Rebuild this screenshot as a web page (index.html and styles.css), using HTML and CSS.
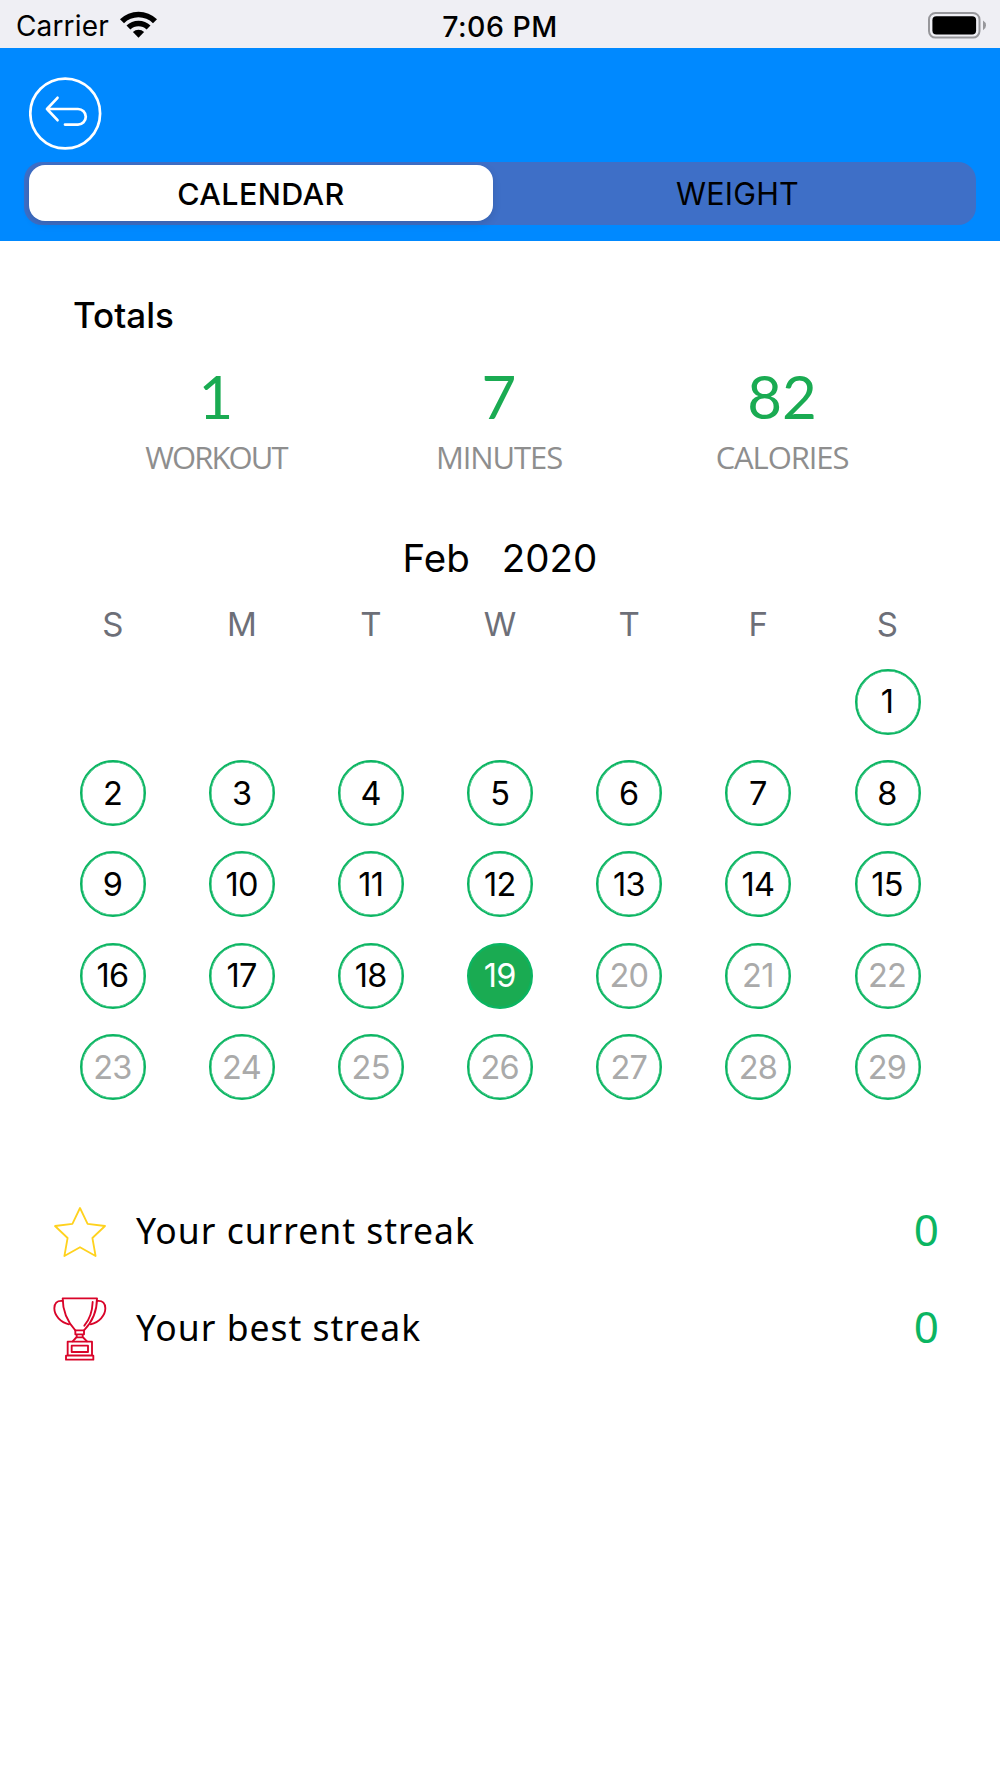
FILE: index.html
```
<!DOCTYPE html>
<html lang="en">
<head>
    <meta charset="UTF-8">
    <meta name="viewport" content="width=device-width, initial-scale=1.0">
    <title>Workout Calendar</title>
    <link rel="stylesheet" href="styles.css">
</head>
<body>
    <div class="status-bar">
        <div class="carrier">
            <span class="carrier-name">Carrier</span>
            <svg class="wifi" width="37" height="27" viewBox="0 0 37 27">
                <path d="M0 8.2 A26.5 26.5 0 0 1 37 8.2 L33 12.2 A20.8 20.8 0 0 0 4 12.2 Z"/>
                <path d="M6.5 14.6 A17.2 17.2 0 0 1 30.5 14.6 L26.6 18.5 A11.7 11.7 0 0 0 10.4 18.5 Z"/>
                <path d="M12.9 21 A8.2 8.2 0 0 1 24.1 21 L18.5 26.8 Z"/>
            </svg>
        </div>
        <div class="time">7:06 PM</div>
        <svg class="battery" width="59" height="27" viewBox="0 0 59 27">
            <rect x="1" y="1" width="50.5" height="24.6" rx="6.5" fill="none" stroke="#97979b" stroke-width="2"/>
            <rect x="4.4" y="4.2" width="43.7" height="18.2" rx="4"/>
            <path d="M55 8.6 Q58 10.4 58 13.4 Q58 16.4 55 18.2 Z" fill="#97979b"/>
        </svg>
    </div>

    <header class="header">
        <button class="back" type="button" aria-label="Back">
            <svg width="73" height="73" viewBox="0 0 73 73">
                <circle cx="36.2" cy="36.5" r="34.9"/>
                <path d="M28.5 20.8 L18 32 L28.5 43.2 M18 32 H49 A7.8 7.8 0 0 1 49 47.6 H36"/>
            </svg>
        </button>
        <div class="tabs">
            <div class="tab active"><span>CALENDAR</span></div>
            <div class="tab"><span>WEIGHT</span></div>
        </div>
    </header>

    <main>
        <h1>Totals</h1>
        <div class="totals">
            <div class="total">
                <div class="value">1</div>
                <div class="label workout">WORKOUT</div>
            </div>
            <div class="total">
                <div class="value">7</div>
                <div class="label">MINUTES</div>
            </div>
            <div class="total">
                <div class="value">82</div>
                <div class="label">CALORIES</div>
            </div>
        </div>

        <div class="month"><span>Feb</span><span>2020</span></div>
        <div class="weekdays">
            <span>S</span><span>M</span><span>T</span><span>W</span><span>T</span><span>F</span><span>S</span>
        </div>
        <div class="days">
            <span class="day first">1</span>
            <span class="day">2</span>
            <span class="day">3</span>
            <span class="day">4</span>
            <span class="day">5</span>
            <span class="day">6</span>
            <span class="day">7</span>
            <span class="day">8</span>
            <span class="day">9</span>
            <span class="day">10</span>
            <span class="day">11</span>
            <span class="day">12</span>
            <span class="day">13</span>
            <span class="day">14</span>
            <span class="day">15</span>
            <span class="day">16</span>
            <span class="day">17</span>
            <span class="day">18</span>
            <span class="day today">19</span>
            <span class="day future">20</span>
            <span class="day future">21</span>
            <span class="day future">22</span>
            <span class="day future">23</span>
            <span class="day future">24</span>
            <span class="day future">25</span>
            <span class="day future">26</span>
            <span class="day future">27</span>
            <span class="day future">28</span>
            <span class="day future">29</span>
        </div>

        <div class="streaks">
            <div class="streak">
                <svg class="star" width="54" height="52" viewBox="0 0 54 52">
                    <path d="M27 2 L34.6 17.8 L52 20 L39.4 32 L42.6 50 L27 41.2 L11.4 50 L14.6 32 L2 20 L19.4 17.8 Z"/>
                </svg>
                <span class="streak-name">Your current streak</span>
                <span class="streak-value">0</span>
            </div>
            <div class="streak">
                <svg class="trophy" width="54" height="64" viewBox="39 320 162 192">
                    <path d="M68 324 H171 C171 364 160 392 132 420 H106 C80 392 68 364 68 324 Z"/>
                    <path d="M68 332 C50 330 43 340 43 354 C43 376 62 396 87 402"/>
                    <path d="M171 332 C189 330 196 340 196 354 C196 376 177 396 152 402"/>
                    <path d="M158 335 C157 366 149 387 133 406"/>
                    <path d="M106 420 V432 H132 V420 M110 432 V440 L98 453 M128 432 V440 L141 453 M110 441 H128"/>
                    <path d="M83 454 H156 V495 H83 Z M95 466 H144 V485 H95 Z M78 496 H160 V508 H78 Z"/>
                </svg>
                <span class="streak-name">Your best streak</span>
                <span class="streak-value">0</span>
            </div>
        </div>
    </main>
</body>
</html>
```
FILE: styles.css
```
* {
    margin: 0;
    padding: 0;
    box-sizing: border-box;
}

body {
    font-family: Inter, 'Liberation Sans', sans-serif;
    background: #fff;
    color: #000;
    min-height: 100vh;
}

.status-bar {
    display: grid;
    grid-template-columns: 1fr auto 1fr;
    align-items: center;
    height: 48px;
    padding: 0 13px 0 16px;
    background: #efeff4;
}

.carrier {
    display: flex;
    align-items: center;
    gap: 11px;
}

.carrier-name {
    font-size: 28px;
    line-height: 48px;
    padding-top: 2px;
    letter-spacing: 0.15px;
}

.wifi {
    margin-bottom: 1px;
}

.time {
    font-size: 28.5px;
    font-weight: 500;
    padding: 2px 3px 0 0;
    letter-spacing: 0.5px;
}

.battery {
    justify-self: end;
}

.header {
    height: 193px;
    padding: 29px 24px 0;
    background: #0089ff;
}

.back {
    display: block;
    width: 73px;
    height: 73px;
    margin-left: 5px;
    background: none;
    border: none;
}

.back svg {
    display: block;
    fill: none;
    stroke: #fff;
    stroke-width: 2.7;
    stroke-linecap: round;
    stroke-linejoin: round;
}

.tabs {
    display: flex;
    height: 63px;
    margin-top: 12px;
    padding: 3px 5px 4px;
    background: #3e6fc7;
    border-radius: 18px;
}

.tab {
    flex: 1;
    display: flex;
    justify-content: center;
    align-items: center;
    padding-left: 11px;
    font-size: 30.5px;
    letter-spacing: 0.2px;
}

.tab.active {
    flex: 0 0 464px;
    padding: 0;
    background: #fff;
    border-radius: 16px;
    font-weight: 500;
    letter-spacing: 0.4px;
    box-shadow: 0 3px 8px rgba(0, 0, 0, 0.12);
}

h1 {
    margin: 53px 0 0 73px;
    font-size: 35px;
    font-weight: 500;
    line-height: 42px;
}

.totals {
    display: grid;
    grid-template-columns: repeat(3, 283px);
    justify-content: center;
    margin-top: 24px;
    text-align: center;
}

.value {
    padding-right: 2px;
    font-family: Lato, sans-serif;
    font-size: 60px;
    line-height: 72px;
    color: #1aab52;
}

.label {
    padding-right: 2px;
    font-family: 'Open Sans', sans-serif;
    font-size: 31px;
    line-height: 40px;
    margin-top: 5px;
    letter-spacing: -1.1px;
    color: #8e8e8e;
}

.label.workout {
    letter-spacing: -1.9px;
}

.month {
    display: flex;
    justify-content: center;
    gap: 32px;
    margin-top: 57px;
    font-size: 38.5px;
    line-height: 48px;
}

.weekdays,
.days {
    display: grid;
    grid-template-columns: repeat(7, 129.1px);
    justify-content: center;
    justify-items: center;
}

.weekdays {
    margin-top: 22px;
    font-size: 33px;
    line-height: 40px;
    color: #6d6f78;
}

.days {
    grid-auto-rows: 91.4px;
    align-items: center;
    margin-top: 12px;
    padding-left: 0.5px;
}

.day {
    display: flex;
    justify-content: center;
    align-items: center;
    width: 66px;
    height: 66px;
    padding-right: 1px;
    border: 2px solid #0bb562;
    border-radius: 50%;
    box-shadow: inset 0 0 0 0.5px #0bb562;
    font-size: 32.5px;
    letter-spacing: -0.7px;
}

/* February starts on a Saturday */
.day.first {
    grid-column: 7;
}

.day.today {
    background: #1aab52;
    color: #fff;
}

.day.future {
    color: #aaa;
}

.streaks {
    margin-top: 71px;
    padding: 0 61px 0 53px;
}

.streak {
    display: flex;
    align-items: center;
    height: 97px;
}

.streak svg {
    fill: none;
    stroke-linejoin: round;
    stroke-linecap: round;
}

.star {
    stroke: #ffd21e;
    stroke-width: 1.8;
}

.trophy {
    stroke: #d90429;
    stroke-width: 5.6;
}

.streak-name {
    margin-left: 29px;
    padding-bottom: 4px;
    font-family: 'Noto Sans', sans-serif;
    font-size: 35.5px;
    letter-spacing: 1px;
}

.streak-value {
    margin-left: auto;
    padding-bottom: 6px;
    font-family: 'Noto Sans', sans-serif;
    font-size: 44px;
    color: #0bb562;
}
```
